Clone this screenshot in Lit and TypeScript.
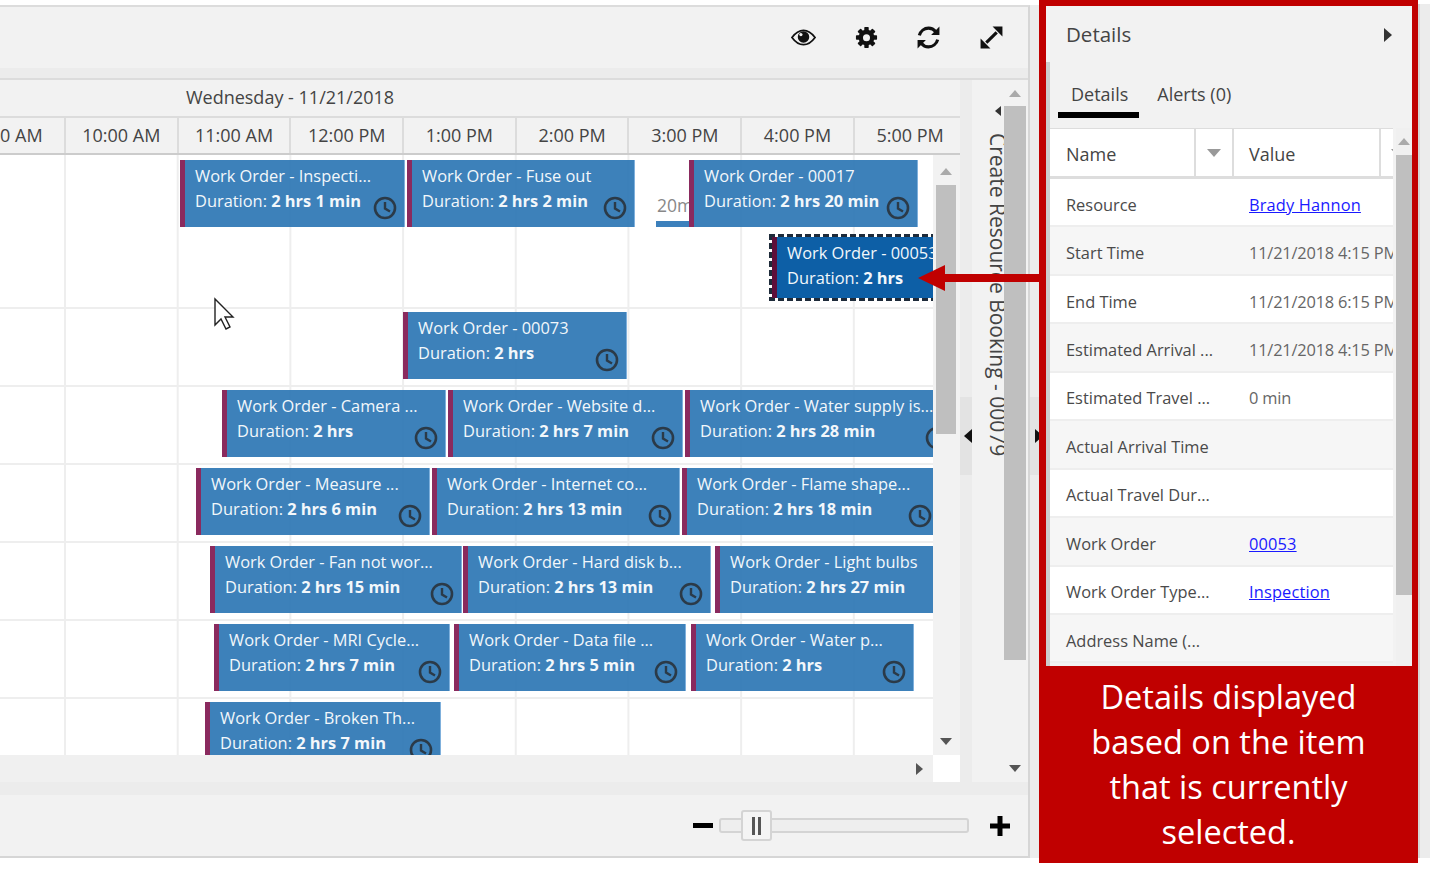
import { LitElement, html, css, svg } from "lit";
import { customElement } from "lit/decorators.js";

interface Card { x: number; y: number; w: number; t: string; d: string; selected?: boolean; noClock?: boolean }

const cards: Card[] = [
  { x: 180, y: 160, w: 225, t: "Work Order - Inspecti...", d: "2 hrs 1 min" },
  { x: 407, y: 160, w: 228, t: "Work Order - Fuse out", d: "2 hrs 2 min" },
  { x: 689, y: 160, w: 229, t: "Work Order - 00017", d: "2 hrs 20 min" },
  { x: 769, y: 234, w: 190, t: "Work Order - 00053", d: "2 hrs", selected: true, noClock: true },
  { x: 403, y: 312, w: 224, t: "Work Order - 00073", d: "2 hrs" },
  { x: 222, y: 390, w: 224, t: "Work Order - Camera ...", d: "2 hrs" },
  { x: 448, y: 390, w: 235, t: "Work Order - Website d...", d: "2 hrs 7 min" },
  { x: 685, y: 390, w: 272, t: "Work Order - Water supply is...", d: "2 hrs 28 min" },
  { x: 196, y: 468, w: 234, t: "Work Order - Measure ...", d: "2 hrs 6 min" },
  { x: 432, y: 468, w: 248, t: "Work Order - Internet co...", d: "2 hrs 13 min" },
  { x: 682, y: 468, w: 258, t: "Work Order - Flame shape...", d: "2 hrs 18 min" },
  { x: 210, y: 546, w: 252, t: "Work Order - Fan not wor...", d: "2 hrs 15 min" },
  { x: 463, y: 546, w: 248, t: "Work Order - Hard disk b...", d: "2 hrs 13 min" },
  { x: 715, y: 546, w: 262, t: "Work Order - Light bulbs", d: "2 hrs 27 min" },
  { x: 214, y: 624, w: 236, t: "Work Order - MRI Cycle...", d: "2 hrs 7 min" },
  { x: 454, y: 624, w: 232, t: "Work Order - Data file ...", d: "2 hrs 5 min" },
  { x: 691, y: 624, w: 223, t: "Work Order - Water p...", d: "2 hrs" },
  { x: 205, y: 702, w: 236, t: "Work Order - Broken Th...", d: "2 hrs 7 min" },
];

const hours = ["9:00 AM", "10:00 AM", "11:00 AM", "12:00 PM", "1:00 PM", "2:00 PM", "3:00 PM", "4:00 PM", "5:00 PM"];
const rowHeights = [154, 78, 78, 78, 78, 78, 56];

const details: { n: string; v?: string; link?: boolean }[] = [
  { n: "Resource", v: "Brady Hannon", link: true },
  { n: "Start Time", v: "11/21/2018 4:15 PM" },
  { n: "End Time", v: "11/21/2018 6:15 PM" },
  { n: "Estimated Arrival ...", v: "11/21/2018 4:15 PM" },
  { n: "Estimated Travel ...", v: "0 min" },
  { n: "Actual Arrival Time" },
  { n: "Actual Travel Dur..." },
  { n: "Work Order", v: "00053", link: true },
  { n: "Work Order Type...", v: "Inspection", link: true },
  { n: "Address Name (..." },
];

const clock = html`<svg class="clock" viewBox="0 0 24 24"><circle cx="12" cy="12" r="10" fill="none" stroke="currentColor" stroke-width="2.6"/><path d="M12 6v6.5l5 3" fill="none" stroke="currentColor" stroke-width="2.4"/></svg>`;

const teeth = [0, 45, 90, 135, 180, 225, 270, 315].map(
  (a) => svg`<rect x="9.6" y="0.6" width="4.8" height="5" rx="0.8" transform="rotate(${a} 12 12)"/>`
);

@customElement("app-root")
export class AppRoot extends LitElement {
  static styles = css`
    :host { display: block; width: 1430px; height: 877px; position: relative; overflow: hidden; background: #fff;
      font-family: "Open Sans", "Noto Sans", sans-serif; color: #444; }
    .layout { display: flex; align-items: flex-start; height: 877px; }

    .board { width: 1030px; height: 853px; margin-top: 5px; box-sizing: border-box; flex: none;
      border-top: 2px solid #dcdcdc; border-right: 2px solid #d6d6d6; border-bottom: 2px solid #d6d6d6;
      display: flex; flex-direction: column; background: #f2f2f2; }
    .toolbar { height: 61px; flex: none; display: flex; align-items: center; justify-content: flex-end; gap: 37.7px; padding-right: 24px; box-sizing: border-box; }
    .toolbar svg { width: 25px; height: 25px; color: #111; display: block; }
    .strip { height: 10px; flex: none; background: #ececec; border-bottom: 2px solid #dcdcdc; }
    .stripLow { height: 13px; flex: none; background: #ececec; }

    .main { height: 702px; flex: none; display: flex; }
    .timeline { width: 960px; flex: none; display: flex; flex-direction: column; }
    .date { height: 36px; flex: none; box-sizing: border-box; padding-right: 380px; text-align: center; font-size: 18px; line-height: 35px; }
    .hours { height: 39px; flex: none; display: flex; overflow: hidden; box-sizing: border-box; border-bottom: 2px solid #ccc; border-top: 2px solid #dcdcdc; }
    .hour { width: 112.7px; flex: none; box-sizing: border-box; border-right: 2px solid #dcdcdc; text-align: center; font-size: 18px; line-height: 34px; white-space: nowrap; }
    .hour:first-child { margin-left: -46.7px; }

    .gridWrap { height: 600px; flex: none; display: flex; }
    .grid { width: 933px; flex: none; background-color: #fff;
      background-image: linear-gradient(90deg, #eee 2px, transparent 2px); background-size: 112.7px 100%; background-position: 64px 0; }
    .row { box-sizing: border-box; border-bottom: 2px solid #eee; }
    .row:last-child { border-bottom: 0; }

    .vbar { flex: none; position: relative; display: flex; flex-direction: column; align-items: center; }
    .vbar.inner { width: 27px; background: #f2f2f2; box-sizing: border-box; padding: 0 4px 0 3px; }
    .up { width: 0; height: 0; border: 6px solid transparent; border-top: 0; border-bottom: 7px solid #aaa; flex: none; }
    .down { width: 0; height: 0; border: 6px solid transparent; border-bottom: 0; border-top: 7px solid #555; flex: none; }
    .thumb { background: #bfbfbf; flex: none; width: 100%; }
    .inner .up { margin-top: 13px; }
    .inner .thumb { height: 249px; margin-top: 10px; width: 20px; }
    .inner .down { margin-top: auto; margin-bottom: 10px; }

    .hscroll { height: 27px; flex: none; display: flex; }
    .htrack { width: 933px; flex: none; background: #f0f0f0; display: flex; align-items: center; justify-content: flex-end; padding-right: 10px; box-sizing: border-box; }
    .right { width: 0; height: 0; border: 6px solid transparent; border-right: 0; border-left: 7px solid #555; }
    .corner { width: 27px; flex: none; background: #fff; }

    .splitter { width: 12px; flex: none; background: #ececec; padding-top: 317px; box-sizing: border-box; }
    .handle { height: 78px; background: #e3e3e3; display: flex; align-items: center; justify-content: flex-end; }
    .tri-left { width: 0; height: 0; border: 7px solid transparent; border-left: 0; border-right: 8px solid #111; }
    .tri-right { width: 0; height: 0; border: 7px solid transparent; border-right: 0; border-left: 8px solid #111; }
    .tri-dark { border-left-color: #333; margin-top: 2px; }

    .side { flex: 1; display: flex; min-width: 0; }
    .sideText { width: 32px; flex: none; overflow: hidden; display: flex; flex-direction: column; align-items: flex-end; padding-top: 26px; box-sizing: border-box; }
    .tiny { width: 0; height: 0; border: 5px solid transparent; border-left: 0; border-right: 6px solid #333; align-self: center; margin-left: 20px; }
    .vert { writing-mode: vertical-rl; font-size: 21px; white-space: nowrap; margin-top: 17px; margin-right: -7px; line-height: 26px; }
    .vbar.outer { width: 22px; }
    .outer .up { margin-top: 10px; }
    .outer .thumb { height: 554px; margin-top: 9px; }
    .outer .down { margin-top: auto; margin-bottom: 10px; }

    .footer { flex: 1; display: flex; align-items: center; padding-left: 693px; box-sizing: border-box; }
    .minus { width: 20px; height: 5px; background: #000; flex: none; }
    .slider { width: 250px; height: 15px; margin-left: 6px; flex: none; box-sizing: border-box; border: 2px solid #d4d4d4; border-radius: 3px; background: #eee; position: relative; }
    .knob { position: absolute; left: 20px; top: -10px; width: 31px; height: 31px; box-sizing: border-box; background: #f4f4f4; border: 2px solid #d4d4d4; border-radius: 3px; display: flex; align-items: center; justify-content: center; gap: 3px; }
    .knob i { display: block; width: 3px; height: 18px; background: #555; }
    .plus { width: 20px; height: 20px; margin-left: 21px; flex: none; color: #000; }

    .gutter { width: 9px; height: 853px; margin-top: 5px; background: #ececec; flex: none; padding-top: 392px; box-sizing: border-box; }
    .gutter .handle { width: 9px; justify-content: flex-start; padding-left: 5px; box-sizing: border-box; overflow: visible; }

    .callout { width: 379px; height: 863px; flex: none; box-sizing: border-box; background: #c00000; padding: 6px 6px 0 7px; display: flex; flex-direction: column; position: relative; }
    .panel { height: 660px; flex: none; background: #f2f2f2; display: flex; flex-direction: column; overflow: hidden; }
    .phead { height: 56px; flex: none; display: flex; align-items: center; justify-content: space-between; padding: 2px 20px 2px 20px; box-sizing: border-box; font-size: 20.5px; }
    .pbody { flex: 1; border-left: 4px solid #ccc; display: flex; flex-direction: column; min-height: 0; }
    .tabs { height: 66px; flex: none; display: flex; align-items: flex-start; gap: 18px; padding-left: 8px; }
    .tab { font-size: 18px; line-height: 24px; padding: 20px 11px 0 13px; height: 56px; box-sizing: border-box; }
    .tab.on { border-bottom: 6px solid #000; }
    .tab.off { padding-left: 0; }
    .tableWrap { flex: 1; display: flex; min-height: 0; gap: 3px; }
    .table { width: 343px; flex: none; overflow: hidden; }
    .thead { height: 51px; display: flex; background: #fff; box-sizing: border-box; border-top: 1px solid #ddd; border-bottom: 3px solid #ddd; font-size: 18px; line-height: 50px; }
    .th { box-sizing: border-box; border-right: 2px solid #ddd; flex: none; position: relative; }
    .th.name { width: 146px; padding-left: 16px; }
    .th.drop { width: 38px; display: flex; align-items: center; justify-content: center; }
    .th.val { width: 147px; padding-left: 15px; }
    .th.last { flex: 1; border-right: 0; overflow: hidden; display: flex; align-items: center; padding-left: 10px; }
    .caret { width: 0; height: 0; border: 7px solid transparent; border-bottom: 0; border-top: 8px solid #999; flex: none; }
    .tr { height: 48.45px; box-sizing: border-box; display: flex; align-items: center; padding-top: 4px; border-bottom: 2px solid #eee; background: #fff; font-size: 16.4px; white-space: nowrap; }
    .tr:nth-child(even) { background: #f6f6f6; }
    .td1 { width: 199px; padding-left: 16px; box-sizing: border-box; flex: none; color: #4a4a4a; }
    .td2 { flex: 1; color: #666; min-width: 0; overflow: hidden; letter-spacing: -0.2px; }
    a { color: #1a1aff; text-decoration: underline; letter-spacing: 0.15px; }
    .vbar.pscroll { width: 16px; background: #f0f0f0; }
    .pscroll .up { margin-top: 10px; }
    .pscroll .thumb { height: 440px; margin-top: 10px; }

    .caption { flex: 1; color: #fff; font-size: 32.5px; line-height: 45px; text-align: center; padding-top: 8px; margin: 0 -6px 0 -7px; box-sizing: border-box; }
    .edge { width: 12px; height: 854px; margin-top: 4px; flex: none; box-sizing: border-box; background: #ececec; border-left: 2px solid #d6d6d6; }

    .booking { position: absolute; height: 67px; box-sizing: border-box; background: rgba(40,115,178,0.9); border-left: 5px solid #8a2a5e; color: #f2f7fb; padding-left: 10px; font-size: 16.4px; line-height: 25px; white-space: nowrap; overflow: hidden; padding-top: 3px; border-right: 1px solid #7fb0dc; }
    .booking b { font-weight: 700; }
    .clock { position: absolute; right: 7px; bottom: 7px; width: 24px; height: 24px; color: #2b3a48; }
    .booking.sel { border: 0; padding: 6px 0 0 18px; height: 67px;
      background:
        linear-gradient(#5e0f3a, #5e0f3a) 3px 3px / 5px calc(100% - 6px) no-repeat,
        linear-gradient(#0d5fa6, #0d5fa6) 8px 3px / calc(100% - 8px) calc(100% - 6px) no-repeat,
        repeating-linear-gradient(90deg, #1e2b3a 0 6px, transparent 6px 9px) 0 0 / 100% 3px no-repeat,
        repeating-linear-gradient(90deg, #1e2b3a 0 6px, transparent 6px 9px) 0 100% / 100% 3px no-repeat,
        repeating-linear-gradient(180deg, #1e2b3a 0 6px, transparent 6px 9px) 0 0 / 3px 100% no-repeat; }

    .clip { position: absolute; left: 0; top: 155px; width: 933px; height: 600px; overflow: hidden; }
    .clip .booking { margin-top: -155px; }

    .travel { position: absolute; left: 656px; top: 221px; width: 34px; height: 6px; background: #3c80bc; }
    .travelText { position: absolute; left: 657px; top: 192px; width: 33px; overflow: hidden; font-size: 17.5px; line-height: 26px; color: #888; }

    .arrow { position: absolute; left: 915px; top: 260px; width: 130px; height: 36px; }
    .cursor { position: absolute; left: 213px; top: 297px; width: 22px; height: 33px; }
  `;

  render() {
    return html`
      <div class="layout">
        <section class="board">
          <div class="toolbar">
            <svg viewBox="0 0 26 26" aria-label="view"><path d="M1 13C5 7.500 9 5.500 13 5.500s8 2 12 7.500c-4 5.500-8 7.500-12 7.500S5 18.500 1 13z" fill="none" stroke="currentColor" stroke-width="1.800"/><circle cx="13" cy="12.500" r="6" fill="currentColor"/><circle cx="10.300" cy="10" r="1.700" fill="#f2f2f2"/></svg>
            <svg viewBox="-1.500 -1.500 27 27" aria-label="settings"><g fill="currentColor">${teeth}</g><path fill-rule="evenodd" fill="currentColor" d="M12 3.500a8.500 8.500 0 1 0 0 17 8.500 8.500 0 0 0 0-17zm0 5a3.800 3.800 0 1 1 0 7.600 3.800 3.800 0 0 1 0-7.600z"/></svg>
            <svg viewBox="0 0 24 24" aria-label="refresh"><path d="M3.200 10C4.300 5.800 8 3 12 3c3 0 5.300 1.300 7 3.500" fill="none" stroke="currentColor" stroke-width="3"/><path d="M22.500 1.500v8h-8z" fill="currentColor"/><path d="M20.800 14c-1.100 4.200-4.800 7-8.800 7-3 0-5.300-1.300-7-3.500" fill="none" stroke="currentColor" stroke-width="3"/><path d="M1.500 22.500v-8h8z" fill="currentColor"/></svg>
            <svg viewBox="0 0 24 24" aria-label="expand"><path d="M13 1.500h9.500V11zM11 22.500H1.500V13z" fill="currentColor"/><path d="M17 7L7 17" stroke="currentColor" stroke-width="3" fill="none"/></svg>
          </div>
          <div class="strip"></div>
          <div class="main">
            <div class="timeline">
              <div class="date">Wednesday - 11/21/2018</div>
              <div class="hours">${hours.map((h) => html`<div class="hour">${h}</div>`)}</div>
              <div class="gridWrap">
                <div class="grid">${rowHeights.map((h) => html`<div class="row" style="height:${h}px"></div>`)}</div>
                <div class="vbar inner"><div class="up"></div><div class="thumb"></div><div class="down"></div></div>
              </div>
              <div class="hscroll"><div class="htrack"><div class="right"></div></div><div class="corner"></div></div>
            </div>
            <div class="splitter"><div class="handle"><div class="tri-left"></div></div></div>
            <div class="side">
              <div class="sideText"><div class="tiny"></div><div class="vert">Create Resource Booking - 00079</div></div>
              <div class="vbar outer"><div class="up"></div><div class="thumb"></div><div class="down"></div></div>
            </div>
          </div>
          <div class="stripLow"></div>
          <div class="footer">
            <div class="minus"></div>
            <div class="slider"><div class="knob"><i></i><i></i></div></div>
            <svg class="plus" viewBox="0 0 20 20"><path d="M7.500 0h5v7.500H20v5h-7.500V20h-5v-7.500H0v-5h7.500z" fill="currentColor"/></svg>
          </div>
        </section>
        <div class="gutter"><div class="handle"><div class="tri-right"></div></div></div>
        <aside class="callout">
          <div class="panel">
            <div class="phead"><span>Details</span><div class="tri-right tri-dark"></div></div>
            <div class="pbody">
              <div class="tabs"><div class="tab on">Details</div><div class="tab off">Alerts (0)</div></div>
              <div class="tableWrap">
                <div class="table">
                  <div class="thead">
                    <div class="th name">Name</div>
                    <div class="th drop"><div class="caret"></div></div>
                    <div class="th val">Value</div>
                    <div class="th last"><div class="caret"></div></div>
                  </div>
                  <div>${details.map((d) => html`<div class="tr"><div class="td1">${d.n}</div><div class="td2">${d.link ? html`<a>${d.v}</a>` : d.v}</div></div>`)}</div>
                </div>
                <div class="vbar pscroll"><div class="up"></div><div class="thumb"></div></div>
              </div>
            </div>
          </div>
          <div class="caption">Details displayed<br />based on the item<br />that is currently<br />selected.</div>
        </aside>
        <div class="edge"></div>
      </div>

      <div class="travelText">20m</div>
      <div class="travel"></div>
      <div class="clip">
        ${cards.map(
          (c) => html`<div class="booking ${c.selected ? "sel" : ""}" style="left:${c.x}px;top:${c.y}px;width:${c.w}px">
            <div class="txt">${c.t}<br />Duration: <b>${c.d}</b></div>
            ${c.noClock ? "" : clock}
          </div>`
        )}
      </div>
      <svg class="arrow" viewBox="0 0 130 36"><path d="M3 18L30 5v9h100v8H30v9z" fill="#c00000"/></svg>
      <svg class="cursor" viewBox="0 0 22 33"><path d="M2 2v26l6-6 5 10 4-2-5-10h8z" fill="#fff" stroke="#222" stroke-width="1.400"/></svg>
    `;
  }
}
